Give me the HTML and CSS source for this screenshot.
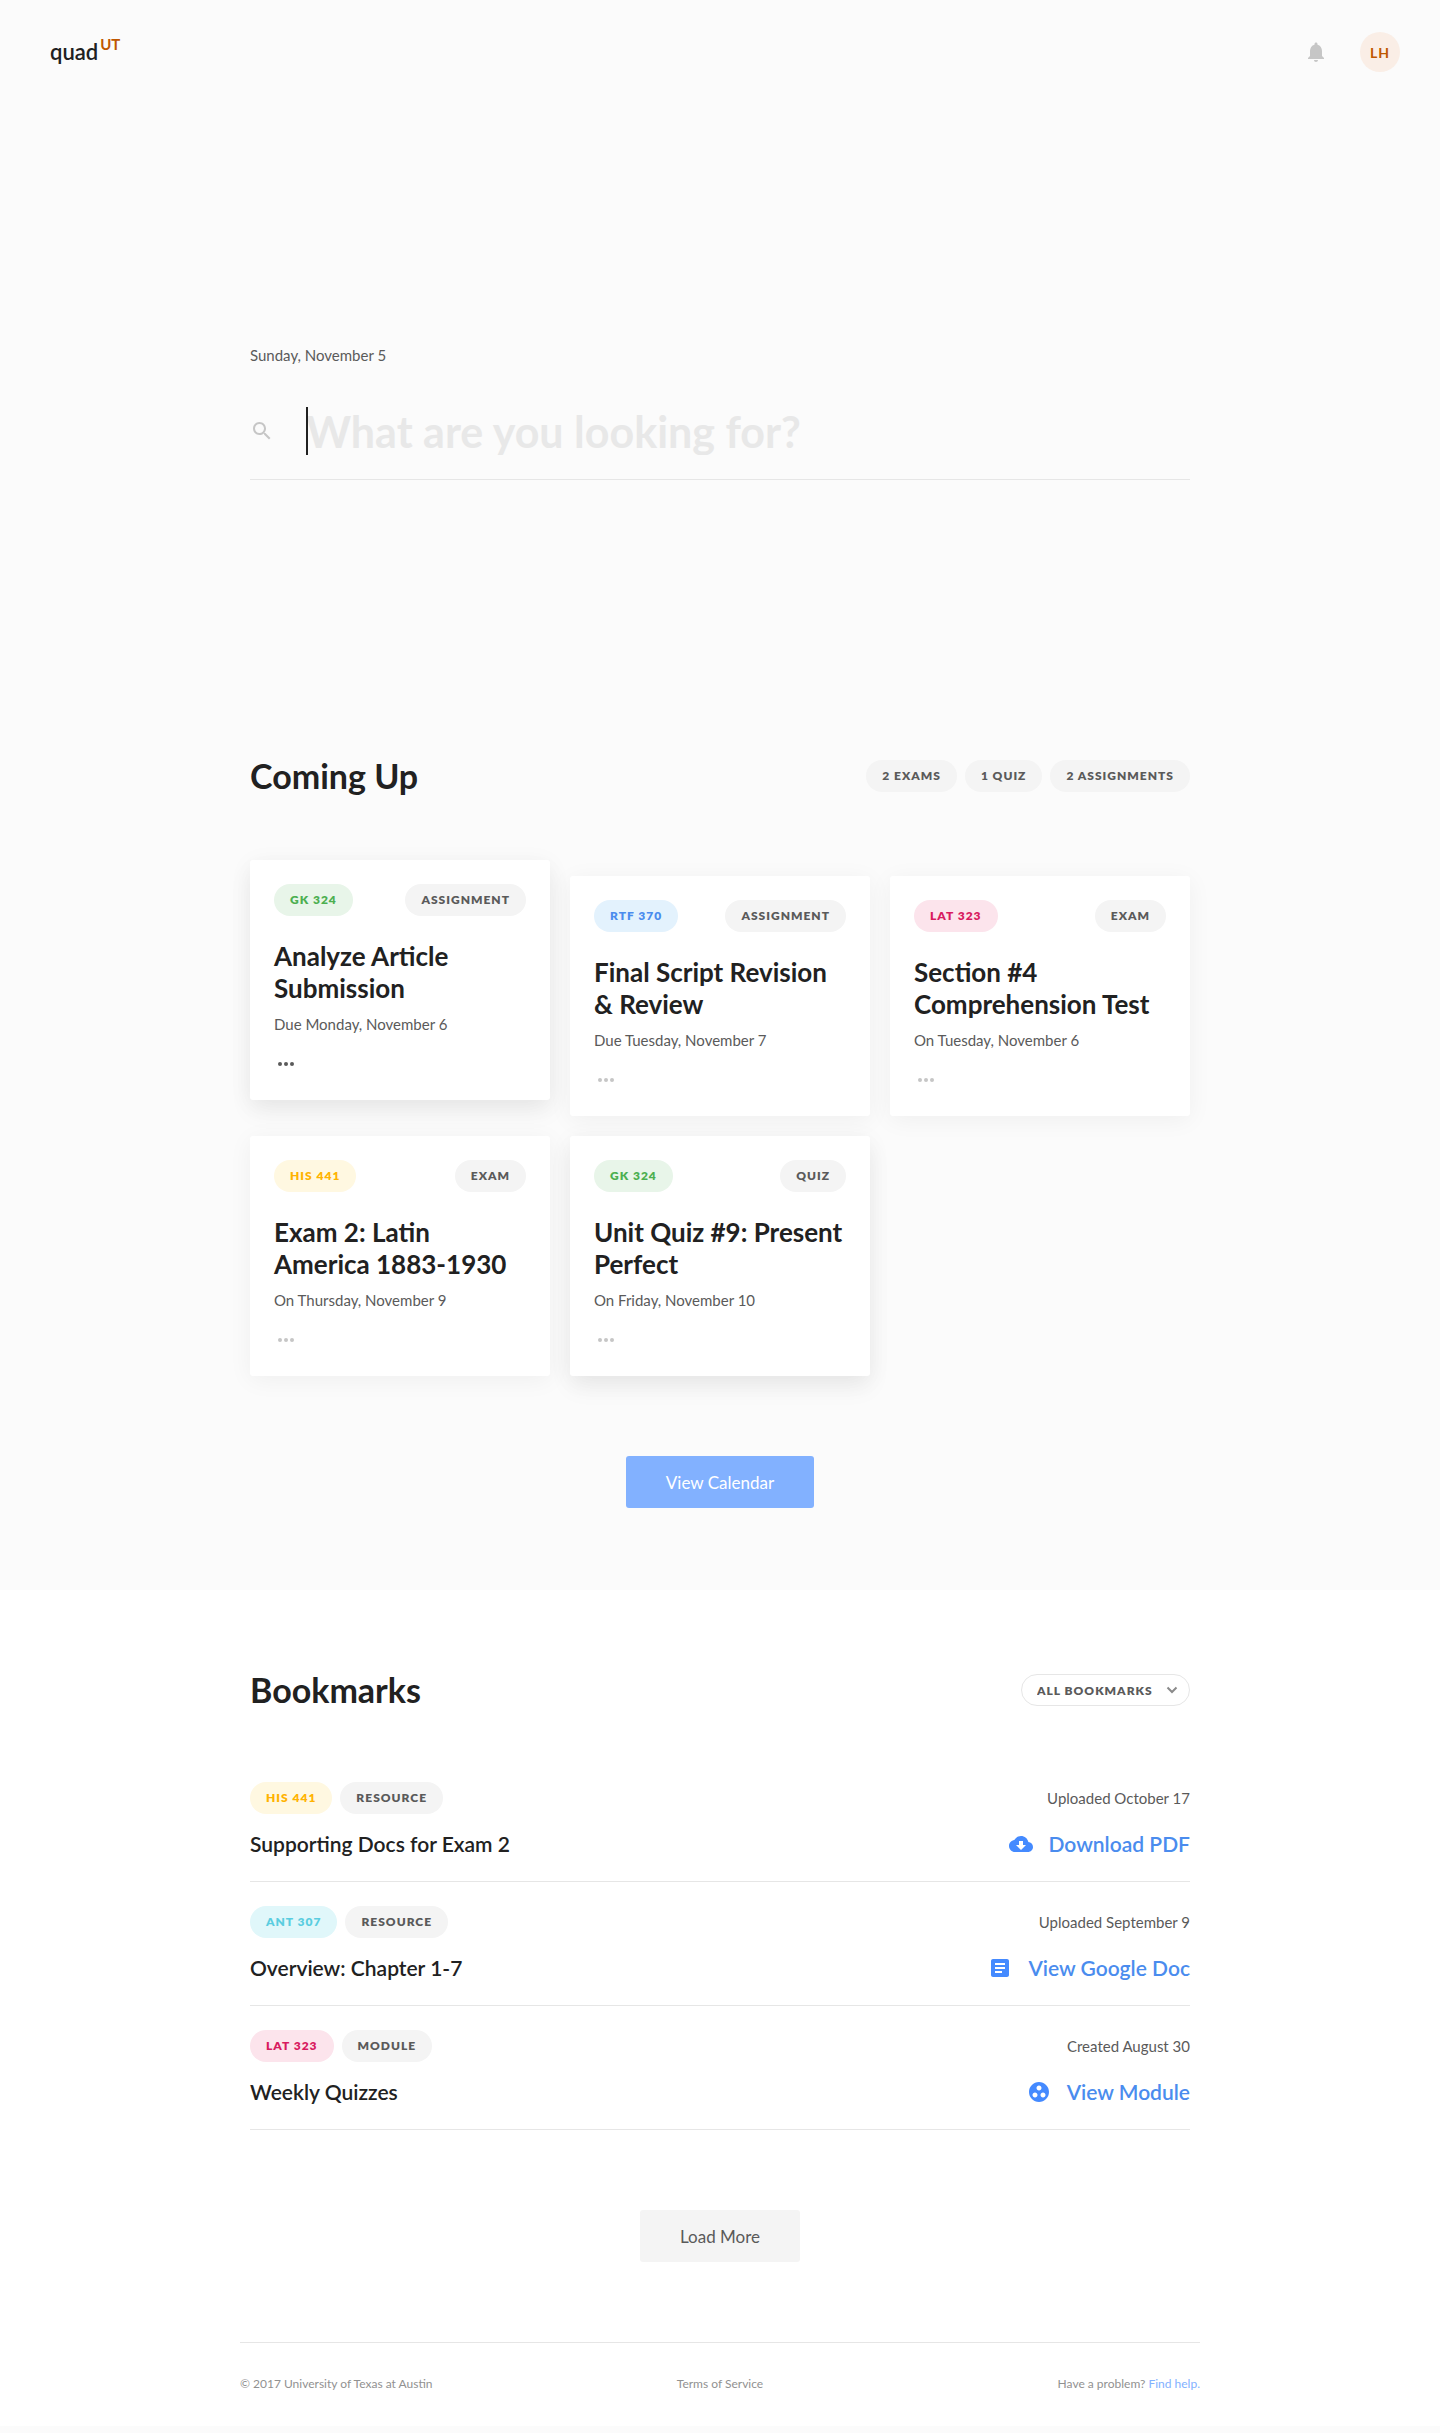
FILE: index.html
```html
<!DOCTYPE html>
<html lang="en">
<head>
<meta charset="utf-8">
<meta name="viewport" content="width=device-width, initial-scale=1">
<title>quad UT</title>
<link rel="stylesheet" href="styles.css">
</head>
<body>
<svg class="sprite" aria-hidden="true">
  <symbol id="more" viewBox="0 0 24 24"><circle cx="6" cy="12" r="2"/><circle cx="12" cy="12" r="2"/><circle cx="18" cy="12" r="2"/></symbol>
</svg>
<header class="topbar">
  <a class="logo" href="#">quad<span class="logo-campus">UT</span></a>
  <div class="topbar-actions">
    <button class="icon-button" type="button" aria-label="Notifications">
      <svg class="icon" viewBox="0 0 24 24"><path d="M12 22c1.100 0 2-.9 2-2h-4c0 1.100.89 2 2 2zm6-6v-5c0-3.070-1.640-5.640-4.500-6.320V4c0-.83-.67-1.500-1.500-1.500s-1.500.67-1.500 1.500v.68C7.630 5.360 6 7.920 6 11v5l-2 2v1h16v-1l-2-2z"/></svg>
    </button>
    <button class="avatar" type="button" aria-label="Account LH">LH</button>
  </div>
</header>
<main>
  <section class="search container">
    <p class="meta">Sunday, November 5</p>
    <form class="search-form">
      <svg class="icon" viewBox="0 0 24 24" aria-hidden="true"><path d="M15.500 14h-.79l-.28-.27C15.410 12.590 16 11.110 16 9.500 16 5.910 13.090 3 9.500 3S3 5.910 3 9.500 5.910 16 9.500 16c1.610 0 3.090-.59 4.230-1.570l.27.28v.79l5 4.990L20.490 19l-4.990-5zm-6 0C7.010 14 5 11.990 5 9.500S7.010 5 9.500 5 14 7.010 14 9.500 11.990 14 9.500 14z"/></svg>
      <div class="search-field">
        <input type="search" aria-label="Search" placeholder="What are you looking for?">
        <span class="caret"></span>
      </div>
    </form>
  </section>
  <section class="upcoming container">
    <div class="section-head">
      <h2>Coming Up</h2>
      <div class="pills"><span class="pill">2 Exams</span><span class="pill">1 Quiz</span><span class="pill">2 Assignments</span></div>
    </div>
    <div class="cards">
      <article class="card card-raised card-active">
        <div class="card-tags"><span class="pill green">GK 324</span><span class="pill">Assignment</span></div>
        <h3>Analyze Article<br>Submission</h3>
        <p class="meta">Due Monday, November 6</p>
        <button class="icon-button" type="button" aria-label="More options"><svg class="icon" viewBox="0 0 24 24"><use href="#more"/></svg></button>
      </article>
      <article class="card">
        <div class="card-tags"><span class="pill blue">RTF 370</span><span class="pill">Assignment</span></div>
        <h3>Final Script Revision<br>&amp; Review</h3>
        <p class="meta">Due Tuesday, November 7</p>
        <button class="icon-button" type="button" aria-label="More options"><svg class="icon" viewBox="0 0 24 24"><use href="#more"/></svg></button>
      </article>
      <article class="card">
        <div class="card-tags"><span class="pill pink">LAT 323</span><span class="pill">Exam</span></div>
        <h3>Section #4<br>Comprehension Test</h3>
        <p class="meta">On Tuesday, November 6</p>
        <button class="icon-button" type="button" aria-label="More options"><svg class="icon" viewBox="0 0 24 24"><use href="#more"/></svg></button>
      </article>
      <article class="card">
        <div class="card-tags"><span class="pill amber">HIS 441</span><span class="pill">Exam</span></div>
        <h3>Exam 2: Latin<br>America 1883-1930</h3>
        <p class="meta">On Thursday, November 9</p>
        <button class="icon-button" type="button" aria-label="More options"><svg class="icon" viewBox="0 0 24 24"><use href="#more"/></svg></button>
      </article>
      <article class="card card-raised">
        <div class="card-tags"><span class="pill green">GK 324</span><span class="pill">Quiz</span></div>
        <h3>Unit Quiz #9: Present<br>Perfect</h3>
        <p class="meta">On Friday, November 10</p>
        <button class="icon-button" type="button" aria-label="More options"><svg class="icon" viewBox="0 0 24 24"><use href="#more"/></svg></button>
      </article>
    </div>
    <button class="button button-primary" type="button">View Calendar</button>
  </section>
  <section class="bookmarks">
    <div class="container">
      <div class="section-head">
        <h2>Bookmarks</h2>
        <div class="filter">
          <select aria-label="Filter bookmarks"><option>All Bookmarks</option></select>
          <svg viewBox="0 0 12 12" aria-hidden="true"><path d="M1.500 3.500 6 8l4.500-4.500"/></svg>
        </div>
      </div>
      <ul class="bookmark-list">
        <li>
          <div class="row"><div class="pills"><span class="pill amber">HIS 441</span><span class="pill">Resource</span></div><p class="meta">Uploaded October 17</p></div>
          <div class="row"><h3>Supporting Docs for Exam 2</h3>
            <a href="#"><svg class="icon" viewBox="0 0 24 24" aria-hidden="true"><path d="M19.350 10.040C18.670 6.590 15.640 4 12 4 9.110 4 6.600 5.640 5.350 8.040 2.340 8.360 0 10.910 0 14c0 3.310 2.690 6 6 6h13c2.760 0 5-2.240 5-5 0-2.640-2.050-4.780-4.650-4.960zM17 13l-5 5-5-5h3V9h4v4h3z"/></svg>Download PDF</a></div>
        </li>
        <li>
          <div class="row"><div class="pills"><span class="pill cyan">ANT 307</span><span class="pill">Resource</span></div><p class="meta">Uploaded September 9</p></div>
          <div class="row"><h3>Overview: Chapter 1-7</h3>
            <a href="#"><svg class="icon" viewBox="0 0 24 24" aria-hidden="true"><path d="M19 3H5c-1.100 0-2 .9-2 2v14c0 1.100.9 2 2 2h14c1.100 0 2-.9 2-2V5c0-1.100-.9-2-2-2zm-5 14H7v-2h7v2zm3-4H7v-2h10v2zm0-4H7V7h10v2z"/></svg>View Google Doc</a></div>
        </li>
        <li>
          <div class="row"><div class="pills"><span class="pill pink">LAT 323</span><span class="pill">Module</span></div><p class="meta">Created August 30</p></div>
          <div class="row"><h3>Weekly Quizzes</h3>
            <a href="#"><svg class="icon" viewBox="0 0 24 24" aria-hidden="true"><path d="M12 2C6.480 2 2 6.480 2 12s4.480 10 10 10 10-4.480 10-10S17.520 2 12 2zM8 17.500c-1.380 0-2.500-1.120-2.500-2.500s1.120-2.500 2.500-2.500 2.500 1.120 2.500 2.500-1.120 2.500-2.500 2.500zM9.500 8c0-1.380 1.120-2.500 2.500-2.500s2.500 1.120 2.500 2.500-1.120 2.500-2.500 2.500S9.500 9.380 9.500 8zm6.500 9.500c-1.380 0-2.500-1.120-2.500-2.500s1.120-2.500 2.500-2.500 2.500 1.120 2.500 2.500-1.120 2.500-2.500 2.500z"/></svg>View Module</a></div>
        </li>
      </ul>
      <button class="button" type="button">Load More</button>
    </div>
    <footer class="footer">
      <span>© 2017 University of Texas at Austin</span>
      <a href="#">Terms of Service</a>
      <span>Have a problem? <a class="help" href="#">Find help.</a></span>
    </footer>
  </section>
</main>
</body>
</html>
```
FILE: styles.css
```css
* {
  box-sizing: border-box;
}

body {
  margin: 0;
  padding-bottom: 7px;
  background: #fbfbfb;
  color: #212121;
  font-family: Lato, "Liberation Sans", sans-serif;
  font-size: 15px;
  line-height: 24px;
}

h2, h3, p, ul {
  margin: 0;
  padding: 0;
}

a {
  color: inherit;
  text-decoration: none;
}

button, input, select {
  margin: 0;
  border: 0;
  font-family: inherit;
}

.sprite {
  display: none;
}

.icon {
  display: block;
  width: 24px;
  height: 24px;
  fill: currentColor;
}

.icon-button {
  padding: 0;
  background: none;
  color: #c6c6c6;
}

.container {
  width: 100%;
  max-width: 980px;
  margin: 0 auto;
  padding: 0 20px;
}

.meta {
  color: #5a5a5a;
}

/* Top bar */
.topbar {
  display: flex;
  justify-content: space-between;
  padding: 32px 40px 0 50px;
}

.topbar-actions {
  display: flex;
  align-items: center;
  gap: 32px;
}

.logo {
  display: flex;
  font-size: 22px;
  font-weight: 600;
  line-height: 40px;
}

.logo-campus {
  margin-left: 2px;
  color: #bf5700;
  font-size: 15px;
  font-weight: 700;
  line-height: 24px;
}

.avatar {
  width: 40px;
  height: 40px;
  padding: 0;
  border-radius: 50%;
  background: #faeee6;
  color: #bf5700;
  font-size: 14px;
  font-weight: 700;
  letter-spacing: 1px;
}

/* Search */
.search {
  padding-top: 271px;
}

.search-form {
  display: flex;
  align-items: center;
  gap: 32px;
  margin-top: 40px;
  padding-bottom: 24px;
  border-bottom: 1px solid #e6e6e6;
}

.search-form .icon {
  color: #c6c6c6;
}

.search-field {
  position: relative;
  flex: 1;
}

.search-field input {
  display: block;
  width: 100%;
  height: 48px;
  padding: 0;
  background: none;
  color: #212121;
  font-size: 43px;
  font-weight: 700;
  outline: 0;
}

.search-field input::placeholder {
  color: #e8e8e8;
  opacity: 1;
}

.caret {
  position: absolute;
  top: 0;
  left: 0;
  width: 2px;
  height: 48px;
  background: #212121;
}

/* Sections */
.section-head {
  display: flex;
  align-items: center;
  justify-content: space-between;
}

.section-head h2 {
  font-size: 34px;
  line-height: 40px;
}

.upcoming {
  padding-top: 276px;
  padding-bottom: 82px;
}

.pills {
  display: flex;
  gap: 8px;
}

.pill {
  padding: 0 16px;
  border-radius: 16px;
  background: #f4f4f4;
  color: #5a5a5a;
  font-size: 12px;
  font-weight: 800;
  letter-spacing: 1px;
  line-height: 32px;
  text-transform: uppercase;
}

.green {
  background: #e8f5e9;
  color: #4caf50;
}

.blue {
  background: #e3f2fd;
  color: #4a8cee;
}

.pink {
  background: #fce4ec;
  color: #d81b60;
}

.amber {
  background: #fff8e1;
  color: #ffb300;
}

.cyan {
  background: #e0f7fa;
  color: #5acde0;
}

/* Cards */
.cards {
  display: grid;
  grid-template-columns: repeat(auto-fill, minmax(280px, 1fr));
  gap: 20px;
  margin-top: 80px;
}

.card {
  padding: 24px;
  border-radius: 3px;
  background: #fff;
  box-shadow: 0 4px 24px rgba(0, 0, 0, 0.05);
}

.card-raised {
  box-shadow: 0 4px 24px rgba(0, 0, 0, 0.05), 0 12px 24px rgba(0, 0, 0, 0.05);
}

.card-active {
  transform: translateY(-16px);
}

.card-active .icon-button {
  color: #5a5a5a;
}

.card-tags {
  display: flex;
  justify-content: space-between;
}

.card h3 {
  margin: 24px 0 8px;
  font-size: 26px;
  line-height: 32px;
}

.card .icon-button {
  display: block;
  margin-top: 16px;
}

.button {
  display: block;
  height: 52px;
  margin: 80px auto 0;
  padding: 0 40px;
  border-radius: 3px;
  background: #f4f4f4;
  color: #5a5a5a;
  font-size: 17px;
}

.button-primary {
  background: #82b1ff;
  color: #fff;
}

/* Bookmarks */
.bookmarks {
  padding-top: 80px;
  background: #fff;
}

.filter {
  position: relative;
}

.filter select {
  display: block;
  height: 32px;
  padding: 0 35px 0 15px;
  border: 1px solid #e6e6e6;
  border-radius: 16px;
  background: #fff;
  color: #5a5a5a;
  font-size: 12px;
  font-weight: 800;
  letter-spacing: 1px;
  text-transform: uppercase;
  appearance: none;
}

.filter svg {
  position: absolute;
  top: 10px;
  right: 12px;
  width: 12px;
  height: 12px;
  fill: none;
  stroke: #8a8a8a;
  stroke-width: 2;
  pointer-events: none;
}

.bookmark-list {
  margin-top: 48px;
  list-style: none;
}

.bookmark-list li {
  padding: 24px 0 23px;
  border-bottom: 1px solid #e6e6e6;
}

.row {
  display: flex;
  align-items: center;
  justify-content: space-between;
}

.row + .row {
  margin-top: 16px;
}

.row h3,
.row a {
  font-size: 21px;
  font-weight: 600;
  line-height: 28px;
}

.row a {
  display: flex;
  align-items: center;
  gap: 16px;
  color: #4a8cee;
}

.row .icon {
  color: #448aff;
}

.footer {
  display: grid;
  grid-template-columns: 1fr auto 1fr;
  max-width: 960px;
  margin: 80px auto 0;
  padding: 29px 0 30px;
  border-top: 1px solid #e6e6e6;
  color: #919191;
  font-size: 12px;
}

.footer span:last-child {
  text-align: right;
}

.footer .help {
  color: #82b1ff;
}
```
